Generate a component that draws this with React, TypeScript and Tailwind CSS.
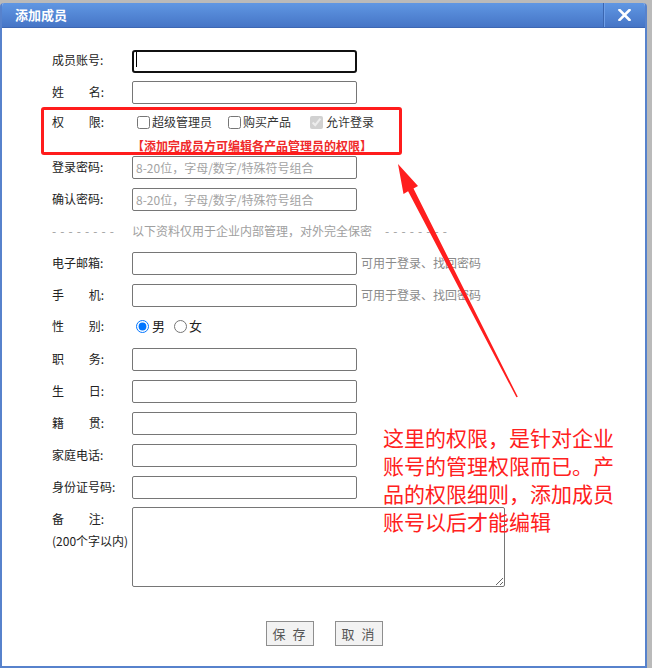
import React from "react";

const font = { fontFamily: '"Noto Sans CJK SC", "Microsoft YaHei", sans-serif' };

const inputCls =
  "h-[23px] w-[225px] rounded-[2px] border border-[#767676] bg-white px-[3px] text-[12px] text-[#333] outline-none placeholder:text-[#a3a3a3]";

// two-char labels are stretched to the width of four chars
const Label = ({ a, b, text }: { a?: string; b?: string; text?: string }) => (
  <div className="w-[80px] shrink-0 text-[12px] text-[#222]">
    {text ? (
      <span className="whitespace-nowrap">{text}</span>
    ) : (
      <span className="flex w-[52px] justify-between">
        <span>{a}</span>
        <span>{b}:</span>
      </span>
    )}
  </div>
);

const Row = ({ children }: { children: React.ReactNode }) => (
  <div className="flex h-[32px] items-center">{children}</div>
);

const Hint = () => <span className="ml-[4px] text-[12px] text-[#8a8a8a]">可用于登录、找回密码</span>;

const Dashes = () => (
  <span className="flex w-[62px] justify-between">
    {Array.from({ length: 8 }).map((_, i) => (
      <span key={i}>-</span>
    ))}
  </span>
);

export default function App() {
  return (
    <div className="relative h-[668px] w-[652px] overflow-hidden bg-[#bababa]" style={font}>
      <div className="mt-[3px] flex h-[665px] w-[647px] flex-col overflow-hidden rounded-t-[4px] border-x-2 border-b-2 border-[#5782cc] bg-white">
        {/* title bar */}
        <div className="flex h-[25px] shrink-0 items-center border-b border-[#3d67b3] bg-linear-to-b from-[#6097e3] to-[#4675c6]">
          <span className="pl-[13px] text-[13px] font-bold text-white">添加成员</span>
          <div className="ml-auto flex h-full w-[42px] items-center justify-center border-l border-[#3b66b0] shadow-[inset_1px_0_0_#6f9fe8]">
            <svg width="13" height="12" viewBox="0 0 13 12">
              <path d="M1.5 1 L11.5 11 M11.5 1 L1.5 11" stroke="white" strokeWidth="2.6" strokeLinecap="square" />
            </svg>
          </div>
        </div>

        {/* form */}
        <div className="flex flex-col pl-[50px] pt-[16px]">
          <Row>
            <Label text="成员账号:" />
            <div className="relative">
              <input className="h-[23px] w-[225px] rounded-[3px] border-2 border-[#111] bg-white px-[3px] text-[12px] outline-none" />
              <span className="absolute left-[4px] top-[4px] h-[15px] w-px bg-black" />
            </div>
          </Row>
          <Row>
            <Label a="姓" b="名" />
            <input className={inputCls} />
          </Row>

          {/* permissions */}
          <div className="flex h-[28px] items-center">
            <Label a="权" b="限" />
            <label className="ml-[5px] flex items-center gap-[2px] text-[12px] text-[#333]">
              <input type="checkbox" className="m-0 h-[13px] w-[13px]" />
              超级管理员
            </label>
            <label className="ml-[16px] flex items-center gap-[2px] text-[12px] text-[#333]">
              <input type="checkbox" className="m-0 h-[13px] w-[13px]" />
              购买产品
            </label>
            <label className="ml-[19px] flex items-center gap-[3px] text-[12px] text-[#333]">
              <input type="checkbox" className="m-0 h-[13px] w-[13px]" defaultChecked disabled />
              允许登录
            </label>
          </div>
          <div className="h-[15px] pl-[80px] text-[12px] font-bold leading-[19px] text-[#f02a2a]">
            【添加完成员方可编辑各产品管理员的权限】
          </div>

          <Row>
            <Label text="登录密码:" />
            <input className={inputCls} placeholder="8-20位，字母/数字/特殊符号组合" />
          </Row>
          <Row>
            <Label text="确认密码:" />
            <input className={inputCls} placeholder="8-20位，字母/数字/特殊符号组合" />
          </Row>

          <Row>
            <div className="flex items-center text-[12px] text-[#a0a0a0]">
              <Dashes />
              <span className="ml-[18px]">以下资料仅用于企业内部管理，对外完全保密</span>
              <span className="ml-[13px]">
                <Dashes />
              </span>
            </div>
          </Row>

          <Row>
            <Label text="电子邮箱:" />
            <input className={inputCls} />
            <Hint />
          </Row>
          <Row>
            <Label a="手" b="机" />
            <input className={inputCls} />
            <Hint />
          </Row>
          <div className="flex h-[32px] items-center pb-[2px]">
            <Label a="性" b="别" />
            <label className="ml-[4px] flex items-center gap-[3px] text-[13px] text-[#222]">
              <input type="radio" name="sex" className="m-0 h-[13px] w-[13px]" defaultChecked />男
            </label>
            <label className="ml-[9px] flex items-center gap-[2px] text-[13px] text-[#222]">
              <input type="radio" name="sex" className="m-0 h-[13px] w-[13px]" />女
            </label>
          </div>
          <Row>
            <Label a="职" b="务" />
            <input className={inputCls} />
          </Row>
          <Row>
            <Label a="生" b="日" />
            <input className={inputCls} />
          </Row>
          <Row>
            <Label a="籍" b="贯" />
            <input className={inputCls} />
          </Row>
          <Row>
            <Label text="家庭电话:" />
            <input className={inputCls} />
          </Row>
          <Row>
            <Label text="身份证号码:" />
            <input className={inputCls} />
          </Row>

          <div className="flex">
            <div className="w-[80px] shrink-0 pt-[6px] text-[12px] text-[#222]">
              <div className="flex w-[52px] justify-between leading-[20px]">
                <span>备</span>
                <span>注:</span>
              </div>
              <div className="mt-[2px] whitespace-nowrap leading-[20px]">(200个字以内)</div>
            </div>
            <textarea className="mt-[4px] h-[80px] w-[373px] rounded-[2px] border border-[#767676] px-[3px] text-[12px] outline-none" />
          </div>
        </div>

        <div className="mt-[34px] flex justify-center gap-[21px] pl-[2px]">
          <button className="h-[25px] w-[48px] border border-[#8e8e8e] bg-[#f2f2f2] text-[13px] tracking-[2px] text-[#555]">
            保 存
          </button>
          <button className="h-[25px] w-[48px] border border-[#8e8e8e] bg-[#f2f2f2] text-[13px] tracking-[2px] text-[#555]">
            取 消
          </button>
        </div>
      </div>

      {/* screenshot annotations */}
      <div className="pointer-events-none absolute left-[41px] top-[107px] h-[48px] w-[361px] rounded-[3px] border-[3px] border-[#ff1c1c]" />
      <svg className="pointer-events-none absolute left-0 top-0" width="652" height="668">
        <polygon
          points="398,164 418,186 413.5,188.5 517.8,396.7 516.4,397.3 408.1,191.3 403.5,194"
          fill="#ff1e1e"
        />
      </svg>
      <div className="pointer-events-none absolute left-[383px] top-[423px] text-[21px] leading-[28px] text-[#ff2020]">
        <div>这里的权限，是针对企业</div>
        <div>账号的管理权限而已。产</div>
        <div>品的权限细则，添加成员</div>
        <div>账号以后才能编辑</div>
      </div>
    </div>
  );
}
